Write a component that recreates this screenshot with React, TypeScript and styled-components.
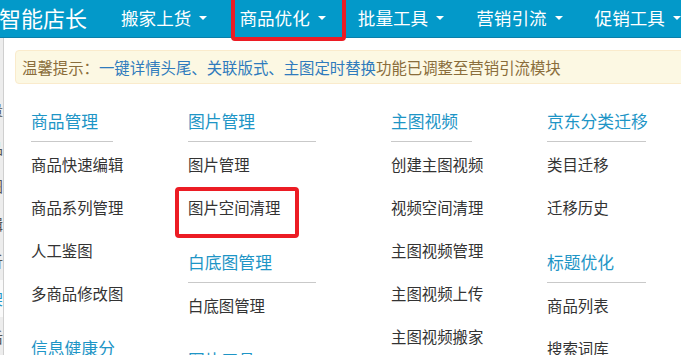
import React from "react";
import styled, { createGlobalStyle } from "styled-components";

const GlobalStyle = createGlobalStyle`
  html, body { margin: 0; padding: 0; overflow: hidden; background: #fff; }
  body { font-family: "Noto Sans CJK SC", "Microsoft YaHei", sans-serif; }
  * { box-sizing: border-box; }
`;

const Page = styled.div`
  width: 100%;
  height: 100vh;
  display: flex;
  flex-direction: column;
`;

const TopBar = styled.header`
  display: flex;
  align-items: center;
  height: 38px;
  flex-shrink: 0;
  background: #0399c9;
  border-bottom: 1px solid #0b7fa9;
  white-space: nowrap;
`;

const Logo = styled.div`
  font-size: 22px;
  line-height: 1;
  color: #fff;
  margin: -3px 18px 0 -1px;
`;

const NavItem = styled.div`
  position: relative;
  display: flex;
  align-items: center;
  height: 100%;
  padding: 0 16px 3px;
  color: #fff;
  font-size: 17.6px;
`;

const Caret = styled.span`
  display: inline-block;
  margin-left: 8px;
  margin-top: 2px;
  width: 0;
  height: 0;
  border-left: 4px solid transparent;
  border-right: 4px solid transparent;
  border-top: 4px solid #fff;
`;

const RedMark = styled.span<{ $top: number; $bottom: number; $left: number; $width: number }>`
  position: absolute;
  top: ${(p) => p.$top}px;
  bottom: ${(p) => p.$bottom}px;
  left: ${(p) => p.$left}px;
  width: ${(p) => p.$width}px;
  border: 4px solid #ec1c24;
  border-radius: 4px;
  pointer-events: none;
`;

const Body = styled.div`
  flex: 1;
  display: flex;
  min-height: 0;
`;

const Sidebar = styled.aside`
  width: 4px;
  flex-shrink: 0;
  background: #ededed;
  border-right: 1px solid #cfcfcf;
  overflow: hidden;
  padding-top: 53px;
  display: flex;
  flex-direction: column;
`;

const SideItem = styled.div<{ $active?: boolean }>`
  height: 38px;
  width: 3px;
  display: flex;
  align-items: center;
  justify-content: flex-end;
  font-size: 15px;
  color: ${(p) => (p.$active ? "#1e95c6" : "#555")};
  background: ${(p) => (p.$active ? "#fafafa" : "transparent")};
  white-space: nowrap;
`;

const Main = styled.main`
  flex: 1;
  min-width: 0;
  padding: 12px 0 0 11px;
`;

const Notice = styled.div`
  height: 34px;
  margin-right: -10px;
  display: flex;
  align-items: center;
  padding: 0 6px;
  background: #fcf8e3;
  border: 1px solid #faebcc;
  border-radius: 4px;
  color: #8a6d3b;
  font-size: 15.4px;
  white-space: nowrap;
`;

const NoticeLink = styled.span`
  color: #2f7bbd;
`;

const Columns = styled.div`
  display: grid;
  grid-template-columns: 82px 128px 81px 99px;
  column-gap: 75px;
  margin: 3px 0 0 16px;
  align-items: start;
`;

const Column = styled.div`
  display: flex;
  flex-direction: column;
`;

const Group = styled.section`
  margin-top: 22px;
`;

const GroupTitle = styled.div`
  font-size: 16.8px;
  line-height: 24px;
  padding-bottom: 8px;
  border-bottom: 1px solid #c9c9c9;
  color: #1e95c6;
  white-space: nowrap;
`;

const Item = styled.div`
  position: relative;
  height: 43px;
  display: flex;
  align-items: center;
  font-size: 15.4px;
  color: #333;
  white-space: nowrap;
`;

type GroupData = { title: string; items: string[] };

const columns: GroupData[][] = [
  [
    { title: "商品管理", items: ["商品快速编辑", "商品系列管理", "人工鉴图", "多商品修改图"] },
    { title: "信息健康分", items: ["健康分诊断"] },
  ],
  [
    { title: "图片管理", items: ["图片管理", "图片空间清理"] },
    { title: "白底图管理", items: ["白底图管理"] },
    { title: "图片工具", items: ["图片处理"] },
  ],
  [{ title: "主图视频", items: ["创建主图视频", "视频空间清理", "主图视频管理", "主图视频上传", "主图视频搬家"] }],
  [
    { title: "京东分类迁移", items: ["类目迁移", "迁移历史"] },
    { title: "标题优化", items: ["商品列表", "搜索词库"] },
  ],
];

const navs = ["搬家上货", "商品优化", "批量工具", "营销引流", "促销工具"];
const sideItems = ["数量", "商品", "主图", "编辑", "分析", "上架", "售后"];

export default function App() {
  return (
    <Page>
      <GlobalStyle />
      <TopBar>
        <Logo>智能店长</Logo>
        {navs.map((n) => (
          <NavItem key={n}>
            {n}
            <Caret />
            {n === "商品优化" && <RedMark $top={-8} $bottom={-4} $left={8} $width={115} />}
          </NavItem>
        ))}
      </TopBar>
      <Body>
        <Sidebar>
          {sideItems.map((s, i) => (
            <SideItem key={s} $active={i === 5}>
              {s}
            </SideItem>
          ))}
        </Sidebar>
        <Main>
          <Notice>
            温馨提示：<NoticeLink>一键详情头尾、关联版式、主图定时替换</NoticeLink>功能已调整至营销引流模块
          </Notice>
          <Columns>
            {columns.map((col, ci) => (
              <Column key={ci}>
                {col.map((g) => (
                  <Group key={g.title}>
                    <GroupTitle>{g.title}</GroupTitle>
                    {g.items.map((it) => (
                      <Item key={it}>
                        {it}
                        {it === "图片空间清理" && <RedMark $top={2} $bottom={-10} $left={-13} $width={124} />}
                      </Item>
                    ))}
                  </Group>
                ))}
              </Column>
            ))}
          </Columns>
        </Main>
      </Body>
    </Page>
  );
}
